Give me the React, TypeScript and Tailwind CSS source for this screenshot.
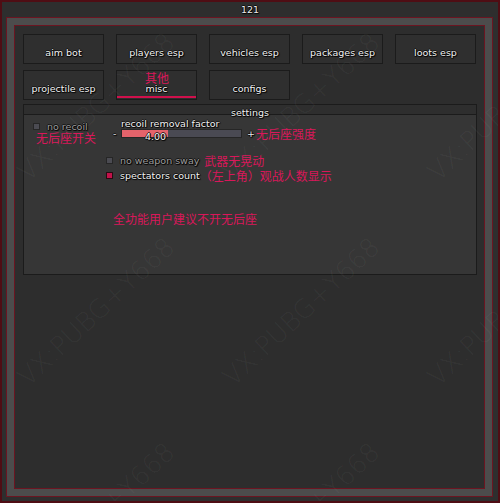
import React from "react";

const T =
  "font-['DejaVu_Sans',sans-serif] text-[9.5px] leading-[11px] whitespace-nowrap [text-shadow:1px_0_0_rgba(10,10,10,0.85),-1px_0_0_rgba(10,10,10,0.85),0_1px_0_rgba(10,10,10,0.85),0_-1px_0_rgba(10,10,10,0.85),1px_1px_1px_#000]";
const CN =
  "font-['Noto_Sans_CJK_SC',sans-serif] text-[12px] leading-[14px] text-[#d9175a] whitespace-nowrap";
const WM =
  "absolute origin-bottom-left -rotate-[43deg] font-['DejaVu_Sans',sans-serif] font-extralight text-[26px] leading-[30px] whitespace-nowrap text-[rgba(255,255,255,0.05)]";

function Btn({ label, active }: { label: string; active?: boolean }) {
  return (
    <div className="relative w-[81px] h-[30px] border border-[#1b1b1b] bg-[#2f2f2f] flex items-center justify-center pt-[7px]">
      <span className={T + " text-[#f2f2f2]"}>{label}</span>
      {active && (
        <>
          <span className={CN + " absolute top-0 left-[28px] leading-[12px]"}>其他</span>
          <div className="absolute left-0 right-0 bottom-[1px] h-[2px] bg-[#d0104c]" />
        </>
      )}
    </div>
  );
}

function Box({ checked }: { checked?: boolean }) {
  return (
    <div
      className={
        checked
          ? "w-[7px] h-[7px] shrink-0 border border-[#2a0a12] bg-[#c2124a]"
          : "w-[7px] h-[7px] shrink-0 border border-[#262626] bg-[#4b4b52]"
      }
    />
  );
}

export default function App() {
  return (
    <div className="relative w-[500px] h-[503px] overflow-hidden bg-[#2e2e2e] border-2 border-[#4f0d14] flex flex-col">
      <div className="h-[15px] flex items-center justify-center">
        <span className={T + " text-[#ececec]"}>121</span>
      </div>
      <div className="ml-[4px] w-[487px] h-[480px] border border-[#6b1521] bg-[#4c4c4c] p-[7px] flex">
        <div className="flex-1 border border-[#6b1521] bg-[#2d2d2d] pl-[8px] pt-[8px] flex flex-col">
          <div className="flex flex-col gap-y-[6px]">
            <div className="flex gap-x-[12px]">
              <Btn label="aim bot" />
              <Btn label="players esp" />
              <Btn label="vehicles esp" />
              <Btn label="packages esp" />
              <Btn label="loots esp" />
            </div>
            <div className="flex gap-x-[12px]">
              <Btn label="projectile esp" />
              <Btn label="misc" active />
              <Btn label="configs" />
            </div>
          </div>

          <div className="mt-[4px] w-[454px] h-[171px] border border-[#1b1b1b] bg-[#363636] flex flex-col">
            <div className="h-[10px] shrink-0 border-b border-[#1b1b1b] bg-[#2e2e2e] flex justify-center">
              <span className={T + " mt-[2px] h-[11px] text-[#f0f0f0]"}>settings</span>
            </div>
            <div className="flex flex-1">
              <div className="w-[82px] pl-[9px] pt-[5px] flex flex-col">
                <div className="h-[13px] flex items-center">
                  <Box />
                  <span className={T + " ml-[7px] text-[#9c9c9c]"}>no recoil</span>
                </div>
                <span className={CN + " mt-[-2px] ml-[3px]"}>无后座开关</span>
              </div>

              <div className="flex-1 pt-[3px] flex flex-col">
                <span className={T + " ml-[15px] text-[#f2f2f2]"}>recoil removal factor</span>
                <div className="h-[9px] ml-[7px] flex items-center">
                  <span className={T + " w-[8px] text-[#e6e6e6]"}>-</span>
                  <div className="relative w-[121px] h-[9px] border border-[#262626] bg-[#4a4a53]">
                    <div className="absolute left-0 top-0 bottom-0 w-[46px] bg-[#e4636b]" />
                    <span className={T + " absolute left-[23px] top-[1px] text-[#f4f4f4]"}>4.00</span>
                  </div>
                  <span className={T + " ml-[5px] text-[#e6e6e6]"}>+</span>
                  <span className={CN + " ml-[1px]"}>无后座强度</span>
                </div>

                <div className="mt-[16px] h-[13px] flex items-center">
                  <Box />
                  <span className={T + " ml-[7px] text-[#9c9c9c]"}>no weapon sway</span>
                  <span className={CN + " ml-[5px]"}>武器无晃动</span>
                </div>
                <div className="mt-[2px] h-[13px] flex items-center">
                  <Box checked />
                  <span className={T + " ml-[7px] text-[#f2f2f2]"}>spectators count</span>
                  <span className={CN}>（左上角）观战人数显示</span>
                </div>

                <span className={CN + " mt-[30px] ml-[7px]"}>全功能用户建议不开无后座</span>
              </div>
            </div>
          </div>
        </div>
      </div>

      <div className="absolute inset-0 pointer-events-none overflow-hidden">
        <span className={WM + " left-[30px] top-[155px]"}>VX:PUBG+Y668</span>
        <span className={WM + " left-[235px] top-[155px]"}>VX:PUBG+Y668</span>
        <span className={WM + " left-[440px] top-[155px]"}>VX:PUBG+Y668</span>
        <span className={WM + " left-[30px] top-[360px]"}>VX:PUBG+Y668</span>
        <span className={WM + " left-[235px] top-[360px]"}>VX:PUBG+Y668</span>
        <span className={WM + " left-[440px] top-[360px]"}>VX:PUBG+Y668</span>
        <span className={WM + " left-[30px] top-[565px]"}>VX:PUBG+Y668</span>
        <span className={WM + " left-[235px] top-[565px]"}>VX:PUBG+Y668</span>
        <span className={WM + " left-[440px] top-[565px]"}>VX:PUBG+Y668</span>
      </div>
    </div>
  );
}
